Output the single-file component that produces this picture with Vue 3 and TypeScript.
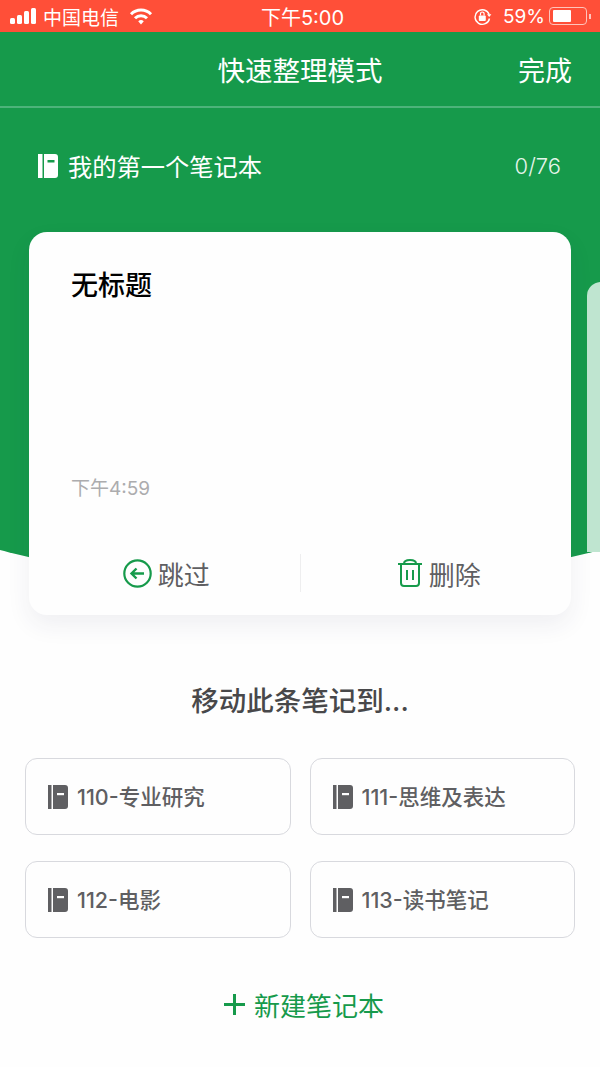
<script setup lang="ts">
const targets = [
  { id: 110, name: '110-专业研究' },
  { id: 111, name: '111-思维及表达' },
  { id: 112, name: '112-电影' },
  { id: 113, name: '113-读书笔记' },
]
</script>

<template>
  <div class="page">
    <div class="green-bg"></div>
    <div class="peek"></div>

    <div class="status-bar">
      <div class="status-left">
        <span class="signal"><i></i><i></i><i></i><i></i></span>
        <span class="carrier">中国电信</span>
        <svg class="wifi" width="24" height="18" viewBox="0 0 24 18" fill="none" stroke="#fff" stroke-width="3">
          <path d="M2 7.200a14 14 0 0 1 20 0" />
          <path d="M6 11.200a8.500 8.500 0 0 1 12 0" />
          <path d="M9.200 14.200a4.200 4.200 0 0 1 5.600 0L12 17.400z" fill="#fff" stroke="none" />
        </svg>
      </div>
      <span class="clock">下午5:00</span>
      <div class="status-right">
        <svg class="lock" width="19" height="19" viewBox="0 0 19 19" fill="none">
          <path d="M16.200 7.500A7.300 7.300 0 1 0 16.500 11.500" stroke="#fff" stroke-width="1.400" />
          <path d="M14 7.300h4.400l-2.200 2.600z" fill="#fff" />
          <rect x="5.800" y="8.500" width="7" height="5.500" rx="1" fill="#fff" />
          <path d="M7.500 8.500V6.800a1.800 1.800 0 0 1 3.600 0V8.500" stroke="#fff" stroke-width="1.200" />
        </svg>
        <span class="percent">59%</span>
        <span class="battery"><b></b></span>
        <span class="battery-tip"></span>
      </div>
    </div>

    <div class="nav">
      <span class="nav-title">快速整理模式</span>
      <span class="nav-done">完成</span>
    </div>

    <div class="notebook-row">
      <div class="notebook-name">
        <svg class="book" width="20" height="24" viewBox="0 0 20 24">
          <path d="M0 0h4.500v24H0zM6 0H17a3 3 0 0 1 3 3v18a3 3 0 0 1-3 3H6z" fill="#fff" />
          <rect x="9.500" y="6" width="7" height="2.500" fill="#169a4b" />
        </svg>
        <span>我的第一个笔记本</span>
      </div>
      <span class="counter">0/76</span>
    </div>

    <div class="card">
      <div class="card-body">
        <div class="card-title">无标题</div>
        <div class="card-time">下午4:59</div>
      </div>
      <div class="card-actions">
        <button class="action">
          <svg width="29" height="29" viewBox="0 0 29 29" fill="none" stroke="#169a4b">
            <circle cx="14.500" cy="14.500" r="13.200" stroke-width="2.200" />
            <path d="M21 14.500H8.500M13.500 9.500l-5 5 5 5" stroke-width="2.400" />
          </svg>
          <span>跳过</span>
        </button>
        <span class="action-sep"></span>
        <button class="action delete">
          <svg class="trash" width="24" height="28" viewBox="0 0 24 28" fill="none" stroke="#169a4b" stroke-width="2">
            <path d="M0 5h24M6 4.500C6 2 9 1 12 1s6 1 6 3.500" />
            <path d="M3 5v19a3 3 0 0 0 3 3h12a3 3 0 0 0 3-3V5" />
            <path d="M9 11v10M15 11v10" />
          </svg>
          <span>删除</span>
        </button>
      </div>
    </div>

    <div class="move-title">移动此条笔记到...</div>

    <div class="targets">
      <div v-for="t in targets" :key="t.id" class="target">
        <svg class="book" width="20" height="24" viewBox="0 0 20 24">
          <path d="M0 0h3.500v24H0zM5 0H17a3 3 0 0 1 3 3v18a3 3 0 0 1-3 3H5z" fill="#5f5f62" />
          <rect x="9" y="8" width="7" height="2.200" fill="#fff" />
        </svg>
        <span class="target-name">{{ t.name }}</span>
      </div>
    </div>

    <div class="new-notebook">
      <svg width="21" height="21" viewBox="0 0 21 21">
        <path d="M9 0h3v9h9v3h-9v9H9v-9H0V9h9z" fill="#169a4b" />
      </svg>
      <span>新建笔记本</span>
    </div>
  </div>
</template>

<style>
html, body {
  margin: 0;
  background: #fff;
}
</style>

<style scoped>
.page {
  position: relative;
  width: 600px;
  height: 1067px;
  overflow: hidden;
  background: #fefefe;
  font-family: Inter, "Noto Sans CJK SC", sans-serif;
}
.green-bg {
  position: absolute;
  left: -900px;
  top: -1800px;
  width: 2400px;
  height: 2388px;
  border-radius: 50%;
  background: #169a4b;
}
.peek {
  position: absolute;
  left: 587px;
  top: 282px;
  width: 40px;
  height: 270px;
  border-radius: 14px 0 0 0;
  background: #bfe5d0;
}
.status-bar {
  position: relative;
  height: 32px;
  background: #ff4f38;
  color: #fff;
  display: flex;
  align-items: center;
  justify-content: space-between;
  padding: 0 9px 0 10px;
  font-size: 19px;
}
.status-left, .status-right {
  display: flex;
  align-items: center;
  width: 160px;
}
.status-left {
  width: 164px;
}
.status-right {
  justify-content: flex-end;
}
.signal {
  display: flex;
  align-items: flex-end;
  gap: 2px;
  height: 16px;
}
.signal i {
  width: 5px;
  background: #fff;
  border-radius: 1.5px;
}
.signal i:nth-child(1) { height: 6px; }
.signal i:nth-child(2) { height: 9px; }
.signal i:nth-child(3) { height: 13px; }
.signal i:nth-child(4) { height: 16px; }
.carrier {
  margin-left: 7px;
}
.wifi {
  margin-left: 10px;
}
.clock {
  font-size: 20px;
}
.lock {
  margin-right: 11px;
}
.percent {
  margin-right: 4px;
}
.battery {
  box-sizing: border-box;
  width: 38px;
  height: 18px;
  border: 1px solid #ffc4bb;
  border-radius: 4px;
  padding: 2px 3px;
  display: block;
}
.battery b {
  display: block;
  width: 18px;
  height: 12px;
  background: #fff;
  border-radius: 1px;
}
.battery-tip {
  width: 2px;
  height: 5px;
  margin-left: 2px;
  background: #ffc4bb;
}
.nav {
  position: relative;
  height: 74px;
  display: flex;
  align-items: center;
  justify-content: center;
  border-bottom: 2px solid #4db37a;
  color: #fff;
  font-size: 27px;
}
.nav-title {
  font-size: 27.500px;
}
.nav-done {
  position: absolute;
  right: 28px;
}
.notebook-row {
  position: relative;
  height: 124px;
  padding: 0 39px 9px 38px;
  box-sizing: border-box;
  display: flex;
  justify-content: space-between;
  align-items: center;
  color: #fff;
  font-size: 24.250px;
}
.notebook-name {
  display: flex;
  align-items: center;
  gap: 10px;
}
.counter {
  font-size: 22px;
  font-weight: 300;
  color: #e6f5ec;
}
.card {
  position: relative;
  margin: 0 29px;
  height: 383px;
  display: flex;
  flex-direction: column;
  background: #fefefe;
  border-radius: 18px;
  box-shadow: 0 10px 24px rgba(40, 40, 90, 0.07);
}
.card-body {
  flex: 1;
  padding: 32px 42px 0;
  display: flex;
  flex-direction: column;
  justify-content: space-between;
}
.card-title {
  font-size: 27px;
  font-weight: 500;
  color: #000;
}
.card-time {
  font-size: 19px;
  color: #acacae;
  margin-bottom: 31px;
}
.card-actions {
  height: 84px;
  display: grid;
  grid-template-columns: 1fr 1px 1fr;
  align-items: center;
}
.action {
  display: flex;
  align-items: center;
  justify-content: center;
  gap: 6px;
  border: none;
  background: none;
  padding: 0 0 0 4px;
  color: #5f5f62;
  font: inherit;
  font-size: 26px;
}
.action.delete {
  padding-left: 7px;
}
.trash {
  margin-right: 1px;
}
.action-sep {
  height: 38px;
  background: #eeeeef;
}
.move-title {
  position: relative;
  margin-top: 64px;
  text-align: center;
  font-size: 27.500px;
  font-weight: 500;
  color: #48484a;
}
.targets {
  position: relative;
  margin: 39px 25px 0 25px;
  display: grid;
  grid-template-columns: 1fr 1fr;
  column-gap: 19px;
  row-gap: 26px;
}
.target {
  box-sizing: border-box;
  height: 77px;
  border: 1px solid #d8d9de;
  border-radius: 12px;
  padding-left: 22px;
  display: flex;
  align-items: center;
  gap: 9px;
  font-size: 21.500px;
  font-weight: 500;
  color: #5f5f62;
}
.target-name {
  margin-top: -2px;
}
.new-notebook {
  position: relative;
  margin-top: 48px;
  padding-left: 8px;
  display: flex;
  align-items: center;
  justify-content: center;
  gap: 9px;
  color: #169a4b;
  font-size: 26px;
}
</style>
